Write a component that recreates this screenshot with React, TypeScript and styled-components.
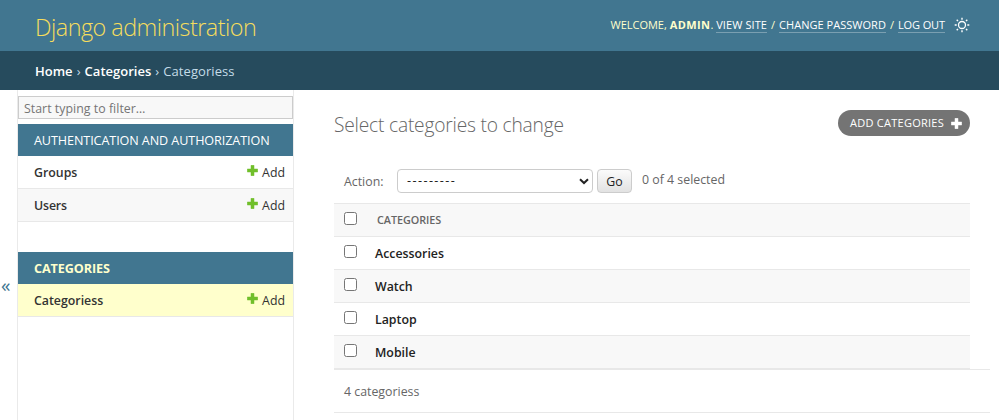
import React from "react";
import styled, { createGlobalStyle } from "styled-components";

const GlobalStyle = createGlobalStyle`
  *, *::before, *::after { box-sizing: border-box; }
  html, body { margin: 0; height: 100%; overflow: hidden; }
  body {
    background: #fff;
    color: #333;
    font: 400 12.35px/16px "Open Sans", "Noto Sans", sans-serif;
  }
  input, select, button { font: inherit; margin: 0; }
  a { color: inherit; text-decoration: none; }
`;

const Page = styled.div`
  display: flex;
  flex-direction: column;
  height: 420px;
`;

const Header = styled.header`
  display: flex;
  justify-content: space-between;
  flex: 0 0 51px;
  padding: 0 29px 0 35px;
  background: #417690;
  color: #ffc;
`;

const SiteName = styled.h1`
  margin: 11px 0 0;
  font-size: 23.4px;
  font-weight: 300;
  line-height: 32px;
  letter-spacing: -0.52px;
  color: #f5dd5d;
  white-space: nowrap;
`;

const UserTools = styled.div`
  display: flex;
  align-items: flex-start;
  padding-top: 17px;
  font-size: 11px;
  line-height: 16px;
  white-space: pre;
`;

const Admin = styled.strong`
  letter-spacing: 0.4px;
`;

const ToolLink = styled.a<{ $spacing?: number }>`
  height: 16px;
  border-bottom: 1px solid #7a9fb1;
  color: #fff;
  letter-spacing: ${(p) => p.$spacing ?? 0}px;
`;

const Slash = styled.span`
  width: 12px;
  text-align: center;
`;

const ThemeButton = styled.button`
  display: flex;
  margin: 0 0 0 9px;
  padding: 0;
  border: 0;
  background: none;
  color: #fff;
`;

const Breadcrumbs = styled.nav`
  display: flex;
  align-items: center;
  flex: 0 0 39px;
  padding: 0 0 0 35px;
  background: #264b5d;
  color: #c4dce8;
  font-size: 13px;
  white-space: pre;
`;

const Crumb = styled.a`
  color: #fff;
  font-weight: 550;
`;

const Separator = styled.span`
  width: 12px;
  text-align: center;
`;

const CurrentCrumb = styled.span`
  letter-spacing: 0.08px;
`;

const Body = styled.div`
  display: flex;
  flex: 1;
  min-height: 0;
`;

const Toggle = styled.button`
  display: flex;
  align-items: flex-start;
  flex: 0 0 18px;
  padding: 183px 0 0 1px;
  border: 0;
  border-right: 1px solid #eaeaea;
  background: #fff;
  color: #417690;
  && { font-size: 19px; line-height: 24px; }
`;

const Sidebar = styled.aside`
  flex: 0 0 276px;
  min-width: 0;
  padding-top: 6px;
  border-right: 1px solid #eaeaea;
`;

const Filter = styled.input`
  display: block;
  width: 100%;
  height: 23px;
  margin-bottom: 5px;
  padding: 2px 5px 0;
  border: 1px solid #ccc;
  border-radius: 0;
  background: #f8f8f8;
  &::placeholder { color: #757575; opacity: 1; letter-spacing: 0.03px; }
`;

const Module = styled.section`
  margin-bottom: 30px;
`;

const Caption = styled.h2<{ $current?: boolean }>`
  margin: 0;
  padding: 9px 16px 7px;
  background: #417690;
  color: ${(p) => (p.$current ? "#ffc" : "#fff")};
  font-size: 12.6px;
  font-weight: ${(p) => (p.$current ? 700 : 400)};
  line-height: 16px;
  letter-spacing: -0.09px;
  white-space: nowrap;
`;

const ModelRow = styled.div<{ $tone?: string }>`
  display: flex;
  align-items: center;
  justify-content: space-between;
  height: 33px;
  padding: 2px 8px 0 16px;
  border-bottom: 1px solid #e8e8e8;
  background: ${(p) => p.$tone ?? "#fff"};
`;

const ModelName = styled.a<{ $spacing?: number }>`
  font-weight: 550;
  letter-spacing: ${(p) => p.$spacing ?? 0}px;
`;

const AddLink = styled.a`
  display: flex;
  gap: 4px;
`;

const Main = styled.main`
  flex: 1;
  min-width: 0;
  padding: 20px 9px 0 40px;
`;

const TitleBar = styled.div`
  display: flex;
  justify-content: space-between;
  height: 59px;
  padding-right: 20px;
`;

const Title = styled.h1`
  margin: 1px 0 0;
  color: #666;
  font-size: 19.2px;
  font-weight: 300;
  line-height: 28px;
  letter-spacing: -0.2px;
`;

const AddButton = styled.a`
  display: flex;
  align-items: center;
  gap: 7px;
  width: 132px;
  height: 26px;
  padding: 0 8px 0 12px;
  border-radius: 13px;
  background: #747474;
  color: #fff;
  font-size: 11px;
  letter-spacing: 0.26px;
  white-space: nowrap;
`;

const Actions = styled.div`
  display: flex;
  align-items: center;
  height: 24px;
  margin-bottom: 10px;
  padding-left: 10px;
  color: #666;
`;

const ActionLabel = styled.label`
  width: 53px;
  padding-top: 2px;
`;

const SelectWrap = styled.div`
  display: grid;
  align-items: center;
  width: 196px;
  margin-right: 4px;
  svg { grid-area: 1 / 1; justify-self: end; margin-right: 4px; pointer-events: none; }
`;

const Select = styled.select`
  grid-area: 1 / 1;
  width: 196px;
  height: 24px;
  padding: 0 9px;
  border: 1px solid #ccc;
  border-radius: 4px;
  background: #fff;
  color: #222;
  appearance: none;
  && { font-size: 12.6px; letter-spacing: 1.42px; }
`;

const GoButton = styled.button`
  width: 35px;
  height: 24px;
  margin-right: 10px;
  padding: 1px 0 0;
  border: 1px solid #ccc;
  border-radius: 4px;
  background: linear-gradient(#fbfbfb, #e2e2e2);
  color: #222;
`;

const Counter = styled.span`
  padding-bottom: 2px;
`;

const Table = styled.div`
  margin-right: 20px;
  border-top: 1px solid #e8e8e8;
`;

const TableRow = styled.div<{ $shaded?: boolean }>`
  display: flex;
  align-items: center;
  height: 33px;
  padding-left: 10px;
  border-bottom: 1px solid #e8e8e8;
  background: ${(p) => (p.$shaded ? "#f8f8f8" : "#fff")};
`;

const Check = styled.input`
  appearance: none;
  flex: 0 0 13px;
  height: 13px;
  margin-bottom: 3px !important;
  border: 1px solid #767676;
  border-radius: 2.5px;
  background: #fff;
`;

const HeadCell = styled.span`
  margin-left: 20px;
  color: #666;
  font-size: 10.8px;
  font-weight: 550;
  letter-spacing: -0.05px;
`;

const NameCell = styled.a`
  margin-left: 18px;
  padding-top: 1px;
  color: #222;
  font-weight: 550;
`;

const Paginator = styled.p`
  height: 44px;
  margin: 0;
  padding: 14px 10px;
  border: solid #e8e8e8;
  border-width: 1px 0;
  color: #666;
`;

const PlusIcon = ({ color, size }: { color: string; size: number }) => (
  <svg width={size} height={size} viewBox="0 0 11 11" fill={color}>
    <path d="M4 .3h3V4h3.7v3H7v3.7H4V7H.3V4H4z" stroke={color} strokeWidth=".5" />
  </svg>
);

const SunIcon = () => (
  <svg width="16" height="16" viewBox="0 0 16 16" fill="none" stroke="currentColor">
    <circle cx="8" cy="8" r="3.5" strokeWidth="1.3" />
    <path
      strokeWidth="1.4"
      d="M8 .7v2M8 13.3v2M.7 8h2M13.3 8h2M2.7 2.7l1.3 1.3M12 12l1.3 1.3M2.7 13.3 4 12M12 4l1.3-1.3"
    />
  </svg>
);

const Chevron = () => (
  <svg width="10" height="7" viewBox="0 0 10 7" fill="none" stroke="#222" strokeWidth="2">
    <path d="M1 1.2 5 5l4-3.8" />
  </svg>
);

const Add = () => (
  <AddLink href="#">
    <PlusIcon color="#70bf2b" size={11} />
    Add
  </AddLink>
);

const categories = ["Accessories", "Watch", "Laptop", "Mobile"];

export default function App() {
  return (
    <Page>
      <GlobalStyle />
      <Header>
        <SiteName>Django administration</SiteName>
        <UserTools>
          {"WELCOME, "}
          <Admin>ADMIN</Admin>
          {". "}
          <ToolLink href="#" $spacing={0.1}>VIEW SITE</ToolLink>
          <Slash>/</Slash>
          <ToolLink href="#" $spacing={0.03}>CHANGE PASSWORD</ToolLink>
          <Slash>/</Slash>
          <ToolLink href="#" $spacing={-0.1}>LOG OUT</ToolLink>
          <ThemeButton aria-label="Toggle theme"><SunIcon /></ThemeButton>
        </UserTools>
      </Header>
      <Breadcrumbs>
        <Crumb href="#">Home</Crumb>
        <Separator>›</Separator>
        <Crumb href="#">Categories</Crumb>
        <Separator>›</Separator>
        <CurrentCrumb>Categoriess</CurrentCrumb>
      </Breadcrumbs>
      <Body>
        <Toggle aria-label="Toggle navigation">«</Toggle>
        <Sidebar>
          <Filter placeholder="Start typing to filter…" />
          <Module>
            <Caption>AUTHENTICATION AND AUTHORIZATION</Caption>
            <ModelRow>
              <ModelName href="#">Groups</ModelName>
              <Add />
            </ModelRow>
            <ModelRow $tone="#f8f8f8">
              <ModelName href="#" $spacing={-0.15}>Users</ModelName>
              <Add />
            </ModelRow>
          </Module>
          <Module>
            <Caption $current>CATEGORIES</Caption>
            <ModelRow $tone="#ffc">
              <ModelName href="#">Categoriess</ModelName>
              <Add />
            </ModelRow>
          </Module>
        </Sidebar>
        <Main>
          <TitleBar>
            <Title>Select categories to change</Title>
            <AddButton href="#">
              ADD CATEGORIES
              <PlusIcon color="#fff" size={11} />
            </AddButton>
          </TitleBar>
          <Actions>
            <ActionLabel htmlFor="action">Action:</ActionLabel>
            <SelectWrap>
              <Select id="action">
                <option>---------</option>
              </Select>
              <Chevron />
            </SelectWrap>
            <GoButton>Go</GoButton>
            <Counter>0 of 4 selected</Counter>
          </Actions>
          <Table>
            <TableRow $shaded>
              <Check type="checkbox" />
              <HeadCell>CATEGORIES</HeadCell>
            </TableRow>
            {categories.map((name, i) => (
              <TableRow key={name} $shaded={i % 2 === 1}>
                <Check type="checkbox" />
                <NameCell href="#">{name}</NameCell>
              </TableRow>
            ))}
          </Table>
          <Paginator>4 categoriess</Paginator>
        </Main>
      </Body>
    </Page>
  );
}
